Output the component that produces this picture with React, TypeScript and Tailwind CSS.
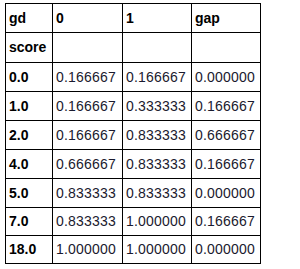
const rows: [string, string, string, string][] = [
  ["0.0", "0.166667", "0.166667", "0.000000"],
  ["1.0", "0.166667", "0.333333", "0.166667"],
  ["2.0", "0.166667", "0.833333", "0.666667"],
  ["4.0", "0.666667", "0.833333", "0.166667"],
  ["5.0", "0.833333", "0.833333", "0.000000"],
  ["7.0", "0.833333", "1.000000", "0.166667"],
  ["18.0", "1.000000", "1.000000", "0.000000"],
];

const th = "border border-black px-[3px] text-left align-middle text-[14px] font-bold";
const td = "border border-black px-[3px] text-left align-middle text-[14px] font-normal text-[#1a1a2e] tracking-[0.2px] whitespace-nowrap";

export default function App() {
  return (
    <div className="w-[300px] h-[269px] bg-white pl-[5px] pt-[3px] text-black" style={{ fontFamily: '"Liberation Sans", Arial, sans-serif' }}>
      <table className="border-collapse table-fixed w-[255px]">
        <colgroup>
          <col className="w-[47px]" />
          <col className="w-[70px]" />
          <col className="w-[69px]" />
          <col className="w-[69px]" />
        </colgroup>
        <thead>
          <tr className="h-[29px]">
            <th className={th}>gd</th>
            <th className={th}>0</th>
            <th className={th}>1</th>
            <th className={th}>gap</th>
          </tr>
          <tr className="h-[30px]">
            <th className={th}>score</th>
            <th className={th}></th>
            <th className={th}></th>
            <th className={th}></th>
          </tr>
        </thead>
        <tbody>
          {rows.map((r, i) => (
            <tr key={r[0]} className={i >= 5 ? "h-[28px]" : "h-[29px]"}>
              <th className={th}>{r[0]}</th>
              <td className={td}>{r[1]}</td>
              <td className={td}>{r[2]}</td>
              <td className={td}>{r[3]}</td>
            </tr>
          ))}
        </tbody>
      </table>
    </div>
  );
}
